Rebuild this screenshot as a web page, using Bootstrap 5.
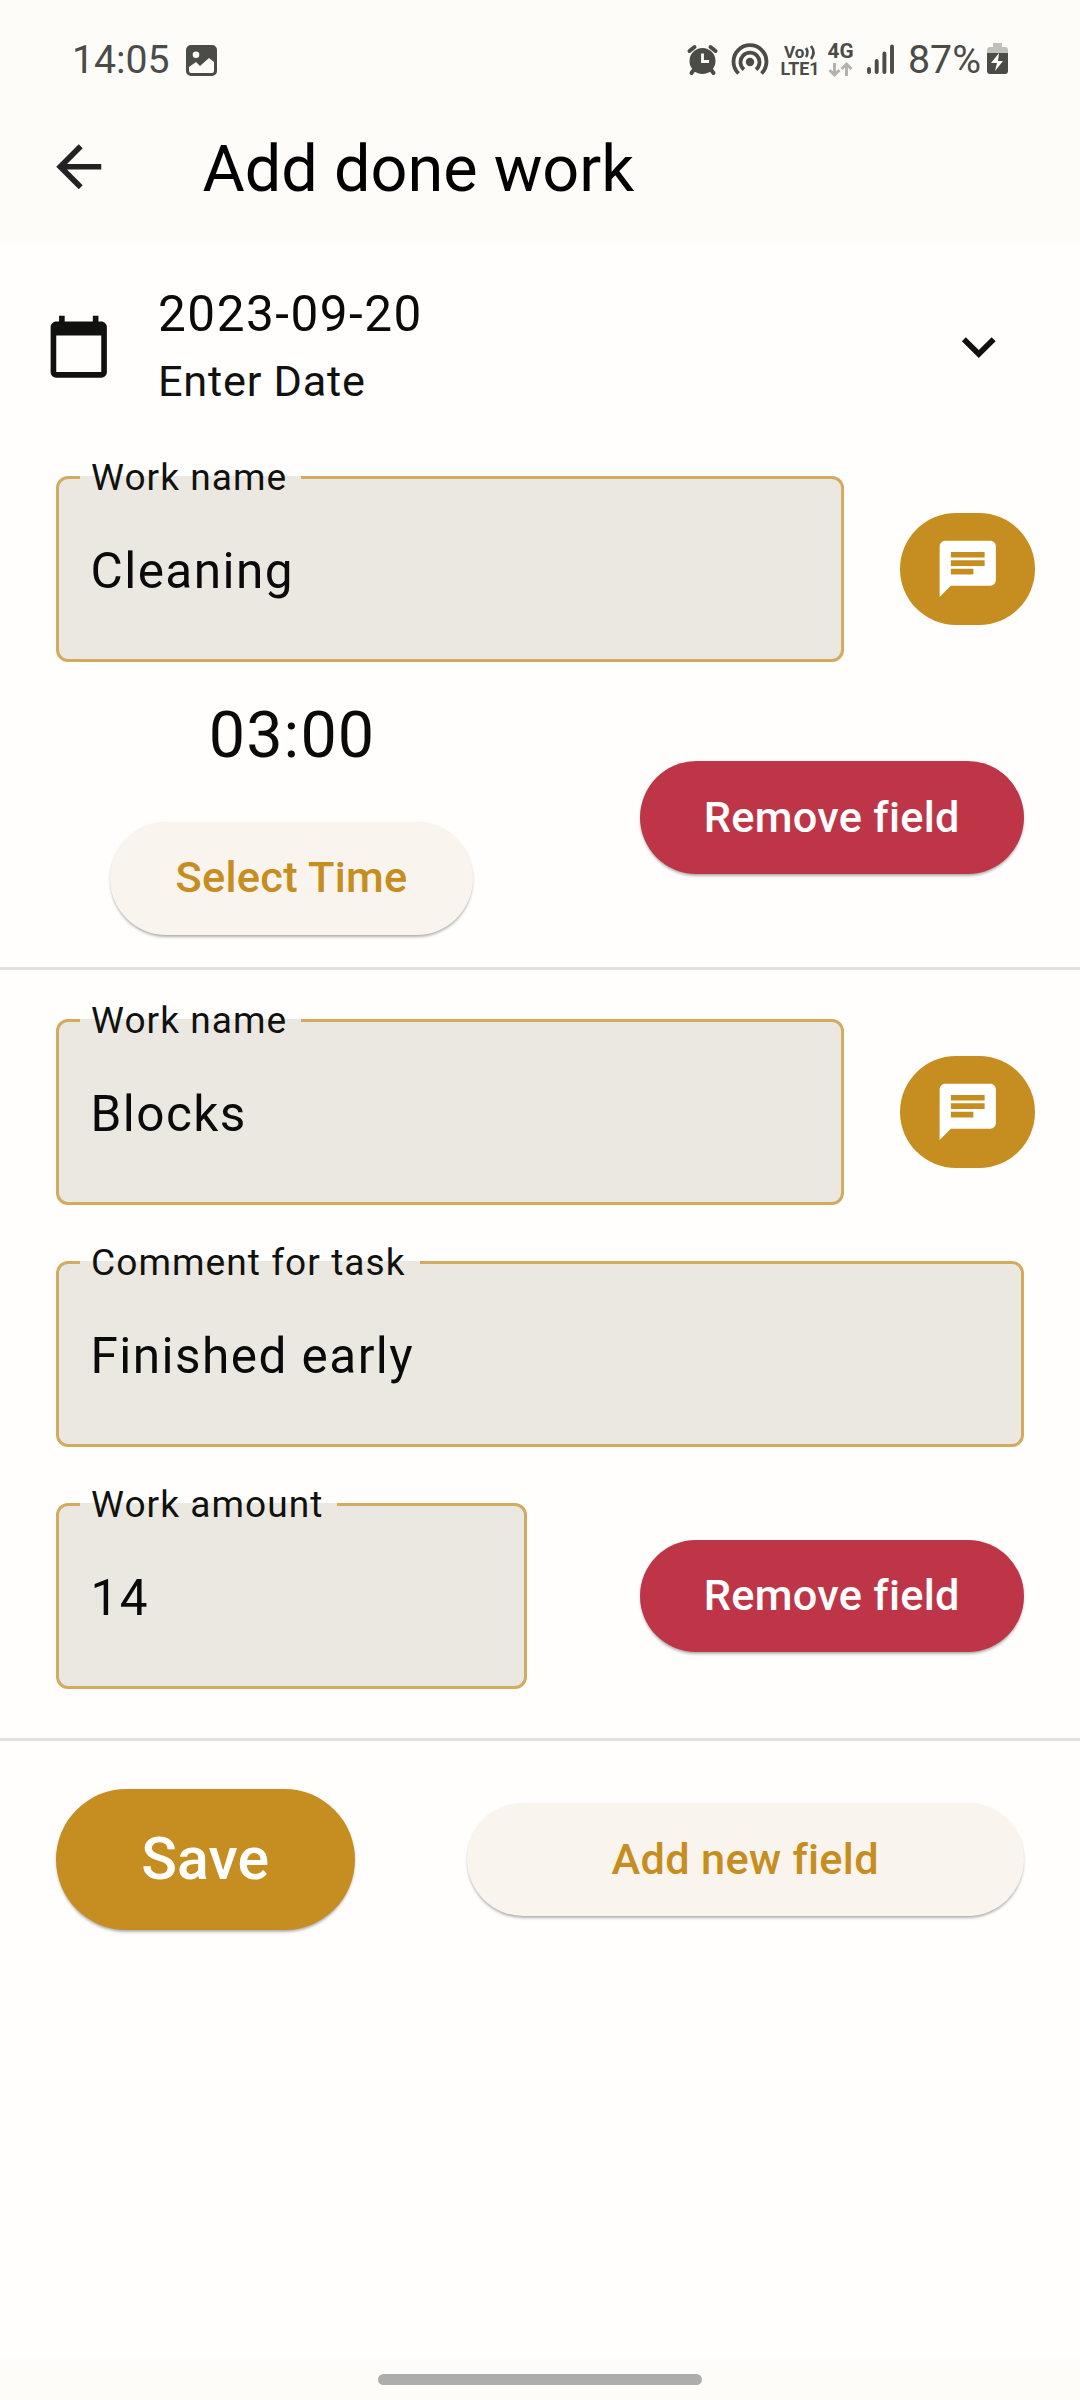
<!DOCTYPE html>
<html lang="en">
<head>
<meta charset="utf-8">
<meta name="viewport" content="width=device-width, initial-scale=1">
<title>Add done work</title>
<link href="https://cdn.jsdelivr.net/npm/bootstrap@5.3.0/dist/css/bootstrap.min.css" rel="stylesheet">
<style>
  :root { --gold: #c68d20; --field: #ebe8e1; --outline: #d2ab5f; --bar: #fdfcf8; --page: #fffefd; --ink: #0a0a0a; --status: #4b4b48; }
  body { font-family: Roboto, "Noto Sans", sans-serif; color: var(--ink); background: var(--page); line-height: 1; }
  .app-screen { width: 1080px; height: 2400px; overflow: hidden; }
  svg { display: block; flex: none; }

  .status-row { height: 120px; padding: 0 70px 0 72px; color: var(--status); font-size: 39.2px; background: var(--bar); }
  .status-row span { padding-top: 2px; }
  .title-row { height: 126px; padding: 0 45px 32px; background: var(--bar); }
  .title-row h1 { font-size: 64.8px; line-height: 76px; margin: 3px 0 0 90px; font-weight: 400; color: #000; }
  .back-icon { color: #222; }
  .mi { width: 67.5px; height: 67.5px; fill: currentColor; }

  .date-row { height: 202px; padding: 0 68px 0 45px; color: #11120f; }
  .date-text { margin-left: 45.5px; padding-top: 2px; }
  .date-main { font-size: 49.5px; line-height: 68px; letter-spacing: 1.5px; color: var(--ink); }
  .date-sub { font-size: 43.3px; line-height: 68px; letter-spacing: .75px; }

  .outlined { position: relative; height: 186px; border: 3px solid var(--outline); border-radius: 12px; background: var(--field); padding: 3px 31.5px 0; }
  .outlined .value { font-size: 49.5px; letter-spacing: 1.45px; line-height: 60px; }
  .outlined .cap-label { position: absolute; z-index: 1; left: 21px; top: -23px; padding: 0 14px 0 11px; font-size: 37.1px; line-height: 44px; letter-spacing: 1.05px; color: #11120f; white-space: nowrap; }
  .outlined .cap-label::before { content: ""; position: absolute; z-index: -1; left: 0; right: 0; top: 20px; height: 4px; background: var(--field); }
  .w-name { width: 787.5px; }
  .w-amount { width: 471px; }

  .pill { display: flex; align-items: center; justify-content: center; height: 112.5px; border: 0; border-radius: 57px; padding: 0; font-size: 43.3px; font-weight: 500; letter-spacing: .3px; line-height: 1; white-space: nowrap; box-shadow: 0 3px 3px -1px rgba(0,0,0,.26), 0 1px 3px rgba(0,0,0,.1); }
  .pill-red { width: 384.5px; background: #be3548; color: #fff; }
  .pill-soft { background: #f9f4ed; color: var(--gold); }
  .pill-gold { background: var(--gold); color: #fff; }
  .pill-note { width: 135px; margin-left: 56.5px; box-shadow: none; }
  .pill-time { width: 362.5px; margin-top: 49px; padding-bottom: 1px; }
  .pill-add { width: 557.5px; }
  .pill-save { width: 298.5px; height: 140.6px; border-radius: 71px; font-size: 59px; letter-spacing: .1px; padding-bottom: 2px; }
  .clock { font-size: 64.7px; line-height: 76px; letter-spacing: 1.1px; padding: 1px 0 0 1px; }

  .sep { height: 3px; background: #e1e0de; }
  .entry-first { height: 519px; padding-top: 28px; }
  .entry-second { height: 768px; padding-top: 49px; }
  .name-line { padding-left: 56px; }
  .entry-pad { padding-left: 56px; padding-right: 56px; }
  .gap-above { padding-top: 56px; }
  .time-line { padding-top: 34px; }
  .time-line .pill-red { margin-top: 4.5px; }
  .actions { padding-top: 48px; }
  .home-bar { height: 42px; background: var(--bar); padding-top: 16px; }
  .home-bar div { width: 324px; height: 11px; border-radius: 6px; background: #adadab; }
</style>
</head>
<body>
<div class="app-screen d-flex flex-column">
  <div class="status-row d-flex align-items-center">
    <span>14:05</span>
    <svg class="ms-3" width="31" height="31" viewBox="0 0 31 31"><path fill="currentColor" fill-rule="evenodd" d="M5 0h21a5 5 0 0 1 5 5v21a5 5 0 0 1-5 5H5a5 5 0 0 1-5-5V5a5 5 0 0 1 5-5zM10 6.500a3.300 3.300 0 1 0 0 6.600a3.300 3.300 0 0 0 0-6.600zM3 22v4q0 2 2 2h21q2 0 2-2v-9l-5-4-9 8-4-4z"/></svg>
    <svg class="ms-auto" width="325" height="60" viewBox="685 30 325 60" fill="none" stroke="#4b4b48">
      <circle cx="702.500" cy="61" r="13" fill="#4b4b48" stroke="none"/>
      <path d="M689.500 51l5-4M715.500 51l-5-4M694.500 69l-3 4M710.500 69l3 4" stroke-width="4" stroke-linecap="round"/>
      <path d="M702.500 53.500v8h6.500" stroke="#fdfcf8" stroke-width="2.800"/>
      <circle cx="750" cy="62" r="4.200" fill="#4b4b48" stroke="none"/>
      <path d="M738.500 73.500a16.500 16.500 0 1 1 23 0M744 69.500a9.500 9.500 0 1 1 12 0" stroke-width="3.800"/>
      <g fill="#4b4b48" stroke="none" font-family="Roboto" font-weight="700">
        <text x="784" y="57.500" font-size="17.300" textLength="20.500" lengthAdjust="spacingAndGlyphs">Vo</text>
        <text x="780.500" y="75" font-size="18.300" textLength="39" lengthAdjust="spacingAndGlyphs">LTE1</text>
        <text x="827.500" y="58" font-size="19.500" textLength="26" lengthAdjust="spacingAndGlyphs">4G</text>
        <text x="908" y="73" font-size="39.300" font-weight="400">87%</text>
      </g>
      <path d="M806 48q3 4.500 0 9M811 46q5 6.500 0 13" stroke-width="2.600"/>
      <path d="M834.500 63v12m-5-5l5 5 5-5M846.500 76v-12m-5 5l5-5 5 5" stroke="#b3b3b0" stroke-width="3"/>
      <path d="M869 69v3M876.700 61v11M884.400 53.500v18.500M892 46.500v25.500" stroke-width="3.900" stroke-linecap="round"/>
      <path d="M987 53v-3q0-3 3-3h3v-4h9v4h3q3 0 3 3v3z" fill="#bfbfbc" stroke="none"/>
      <path d="M987 53h21v18q0 3-3 3h-15q-3 0-3-3z" fill="#4b4b48" stroke="none"/>
      <path d="M999 53l-8 10h6l-2 8 8-10h-5z" fill="#fdfcf8" stroke="none"/>
    </svg>
  </div>

  <div class="title-row d-flex align-items-center">
    <svg class="mi back-icon" viewBox="0 0 24 24"><path d="M20 11H7.830l5.590-5.590L12 4l-8 8 8 8 1.410-1.410L7.830 13H20v-2z"/></svg>
    <h1>Add done work</h1>
  </div>

  <div class="date-row d-flex align-items-center">
    <svg class="mi" viewBox="0 0 24 24"><path d="M20 3h-1V1h-2v2H7V1H5v2H4c-1.100 0-2 .9-2 2v16c0 1.100.9 2 2 2h16c1.100 0 2-.9 2-2V5c0-1.100-.9-2-2-2zm0 18H4V8h16v13z"/></svg>
    <div class="date-text"><div class="date-main">2023-09-20</div><div class="date-sub">Enter Date</div></div>
    <svg class="mi ms-auto" viewBox="0 0 24 24"><path d="M7.410 8.590L12 13.170l4.590-4.580L18 10l-6 6-6-6 1.410-1.410z"/></svg>
  </div>

  <section class="entry-first">
    <div class="name-line d-flex align-items-center">
      <div class="outlined w-name d-flex align-items-center"><label class="cap-label">Work name</label><span class="value">Cleaning</span></div>
      <button class="pill pill-gold pill-note" aria-label="Comment"><svg class="mi" viewBox="0 0 24 24"><path d="M20 2H4c-1.100 0-1.990.9-1.990 2L2 22l4-4h14c1.100 0 2-.9 2-2V4c0-1.100-.9-2-2-2zM6 9h12v2H6V9zm8 5H6v-2h8v2zm4-6H6V6h12v2z"/></svg></button>
    </div>
    <div class="time-line entry-pad d-flex align-items-center justify-content-between">
      <div class="w-amount d-flex flex-column align-items-center"><div class="clock">03:00</div><button class="pill pill-soft pill-time">Select Time</button></div>
      <button class="pill pill-red">Remove field</button>
    </div>
  </section>
  <div class="sep"></div>

  <section class="entry-second">
    <div class="name-line d-flex align-items-center">
      <div class="outlined w-name d-flex align-items-center"><label class="cap-label">Work name</label><span class="value">Blocks</span></div>
      <button class="pill pill-gold pill-note" aria-label="Comment"><svg class="mi" viewBox="0 0 24 24"><path d="M20 2H4c-1.100 0-1.990.9-1.990 2L2 22l4-4h14c1.100 0 2-.9 2-2V4c0-1.100-.9-2-2-2zM6 9h12v2H6V9zm8 5H6v-2h8v2zm4-6H6V6h12v2z"/></svg></button>
    </div>
    <div class="entry-pad gap-above"><div class="outlined d-flex align-items-center"><label class="cap-label">Comment for task</label><span class="value">Finished early</span></div></div>
    <div class="entry-pad gap-above d-flex align-items-center justify-content-between">
      <div class="outlined w-amount d-flex align-items-center"><label class="cap-label">Work amount</label><span class="value">14</span></div>
      <button class="pill pill-red">Remove field</button>
    </div>
  </section>
  <div class="sep"></div>

  <div class="actions entry-pad d-flex align-items-center justify-content-between">
    <button class="pill pill-gold pill-save">Save</button>
    <button class="pill pill-soft pill-add">Add new field</button>
  </div>
  <div class="home-bar mt-auto"><div class="mx-auto"></div></div>
</div>
<script src="https://cdn.jsdelivr.net/npm/bootstrap@5.3.0/dist/js/bootstrap.bundle.min.js"></script>
</body>
</html>
